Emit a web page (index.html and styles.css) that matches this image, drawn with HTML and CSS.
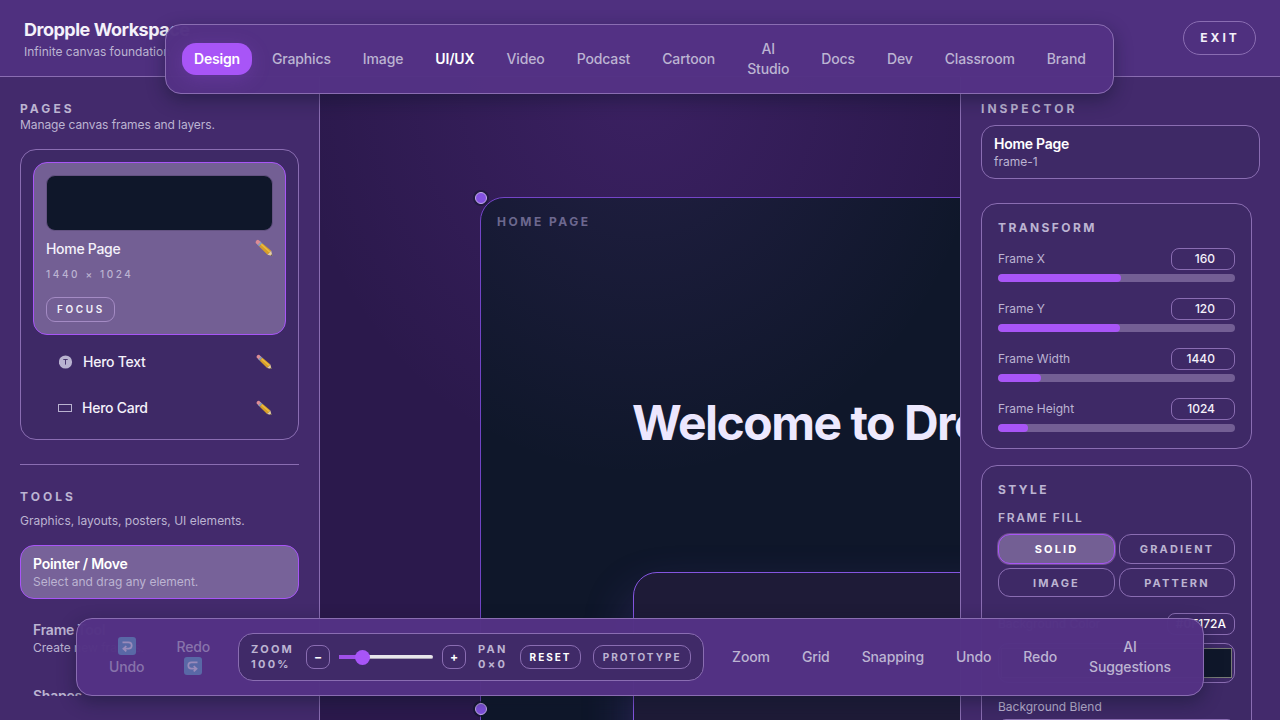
FILE: index.html
```html
<!DOCTYPE html>
<html lang="en">
<head>
<meta charset="utf-8">
<title>Dropple Workspace</title>
<link rel="stylesheet" href="styles.css">
</head>
<body>
<svg class="defs" width="0" height="0" aria-hidden="true">
  <symbol id="pencil" viewBox="0 0 18 18">
    <path d="M3.4.9 6 3.1 3 6.3.7 3.9Q.3 2.6 1.5 1.4 2.6.5 3.4.9Z" fill="#dd8c94"/>
    <path d="M5.5 2.7 7.3 4.2 4.2 7.5 2.5 5.8Z" fill="#8d9cb8"/>
    <path d="M7.3 4.2 16.2 11.7 12.5 15.8 4.2 7.5Z" fill="#d69e2a"/>
    <path d="M6.2 5.3 14.8 13" stroke="#edbd3e" stroke-width="1.4" fill="none"/>
    <path d="M16.2 11.7 17.4 17 12.5 15.8Z" fill="#e5ce9f"/>
    <path d="M16.9 15.3 17.4 17 15.6 16.6Z" fill="#554638"/>
  </symbol>
</svg>
<div class="app">
  <header class="header">
    <div>
      <h1 class="brand">Dropple Workspace</h1>
      <p class="tagline">Infinite canvas foundation</p>
    </div>
    <button class="exit">EXIT</button>
  </header>
  <main class="main">
    <aside class="side left">
      <div class="scroll">
        <h2 class="label">PAGES</h2>
        <p class="desc pages-desc">Manage canvas frames and layers.</p>
        <div class="pages">
          <div class="page-card">
            <div class="thumb"></div>
            <div class="page-row"><span>Home Page</span><svg class="pen" width="18" height="18"><use href="#pencil"/></svg></div>
            <div class="dims">1440 × 1024</div>
            <button class="focus">FOCUS</button>
          </div>
          <div class="layer"><svg width="14" height="14" viewBox="0 0 14 14"><circle cx="6.5" cy="7" r="6.6" fill="#b9b2d0"/><path d="M4.3 4.5h4.4M6.5 4.5v5.1" stroke="#3e2966" stroke-width=".9"/></svg><span class="layer-name">Hero Text</span><svg width="16" height="16"><use href="#pencil"/></svg></div>
          <div class="layer"><svg class="rect-icon" width="14" height="8" viewBox="0 0 14 8"><rect x=".5" y=".5" width="13" height="7" fill="none" stroke="#b9b2d0"/></svg><span class="layer-name">Hero Card</span><svg width="16" height="16"><use href="#pencil"/></svg></div>
        </div>
        <div class="divider"></div>
        <h2 class="label">TOOLS</h2>
        <p class="desc tools-desc">Graphics, layouts, posters, UI elements.</p>
        <div class="tools">
          <div class="tool active"><b>Pointer / Move</b><span>Select and drag any element.</span></div>
          <div class="tool"><b>Frame Tool</b><span>Create new frames.</span></div>
          <div class="tool"><b>Shapes</b><span>Draw shapes.</span></div>
        </div>
      </div>
    </aside>
    <section class="canvas">
      <div class="frame">
        <div class="frame-label">HOME PAGE</div>
        <div class="hero">Welcome to Dropple</div>
        <div class="hero-card"></div>
        <i class="handle corner"></i>
        <i class="handle middle"></i>
      </div>
      <div class="glow"></div>
    </section>
    <aside class="side right">
      <h2 class="label">INSPECTOR</h2>
      <div class="selected"><b>Home Page</b><span>frame-1</span></div>
      <div class="cards">
        <section class="card">
          <h2 class="label">TRANSFORM</h2>
          <div class="field"><div class="field-top"><span class="name">Frame X</span><span class="value">160</span></div><div class="bar"><div class="fill" style="width:52%"></div></div></div>
          <div class="field"><div class="field-top"><span class="name">Frame Y</span><span class="value">120</span></div><div class="bar"><div class="fill" style="width:51.5%"></div></div></div>
          <div class="field"><div class="field-top"><span class="name">Frame Width</span><span class="value">1440</span></div><div class="bar"><div class="fill" style="width:18.2%"></div></div></div>
          <div class="field"><div class="field-top"><span class="name">Frame Height</span><span class="value">1024</span></div><div class="bar"><div class="fill" style="width:12.7%"></div></div></div>
        </section>
        <section class="card style-card">
          <h2 class="label">STYLE</h2>
          <h3 class="sublabel">FRAME FILL</h3>
          <div class="fills">
            <button class="fill-btn on">SOLID</button><button class="fill-btn">GRADIENT</button>
            <button class="fill-btn">IMAGE</button><button class="fill-btn">PATTERN</button>
          </div>
          <div class="field-top color-row"><span class="name">Background Color</span><span class="value hex">#0F172A</span></div>
          <div class="swatch"><div></div></div>
          <div class="blend">Background Blend</div>
          <div class="select"></div>
        </section>
      </div>
    </aside>
  </main>
</div>
<nav class="dock top">
  <span class="item design">Design</span><span class="item">Graphics</span><span class="item">Image</span><span class="item strong">UI/UX</span><span class="item">Video</span><span class="item">Podcast</span><span class="item">Cartoon</span><span class="item">AI<br>Studio</span><span class="item">Docs</span><span class="item">Dev</span><span class="item">Classroom</span><span class="item">Brand</span>
</nav>
<nav class="dock bottom">
  <span class="item off"><svg width="18" height="18" viewBox="0 0 18 18"><rect width="18" height="18" rx="3" fill="#5f9fc9"/><path d="M4.5 5.3h6a3.2 3.2 0 0 1 0 6.4H6M8.3 9 5.4 11.7l2.9 2.7" fill="none" stroke="#dfe3f2" stroke-width="1.7"/></svg>Undo</span>
  <span class="item off">Redo<svg width="18" height="18" viewBox="0 0 18 18"><rect width="18" height="18" rx="3" fill="#5f9fc9"/><path d="M13.5 5.3h-6a3.2 3.2 0 0 0 0 6.4H12M9.7 9l2.9 2.7-2.9 2.7" fill="none" stroke="#dfe3f2" stroke-width="1.7"/></svg></span>
  <div class="zoombox">
    <div class="stat zoom">ZOOM<br>100%</div>
    <button class="step">−</button>
    <div class="slider"><div class="slider-fill"></div><div class="thumb-dot"></div></div>
    <button class="step">+</button>
    <div class="stat pan">PAN<br>0×0</div>
    <button class="mini reset">RESET</button>
    <button class="mini proto">PROTOTYPE</button>
  </div>
  <span class="item">Zoom</span><span class="item">Grid</span><span class="item">Snapping</span><span class="item">Undo</span><span class="item">Redo</span><span class="item">AI<br>Suggestions</span>
</nav>
</body>
</html>
```
FILE: styles.css
```css
:root {
  --line: #8a6db2;
  --accent: #a855f7;
  --muted: #bcb4d2;
  --text: #f4f1fa;
}
* { box-sizing: border-box; margin: 0; padding: 0; }
body { width: 1280px; height: 720px; overflow: hidden; font-family: Inter, "Liberation Sans", sans-serif; color: var(--text); background: #2b194c; font-size: 12px; }
button { font: inherit; color: inherit; background: none; border: 1px solid var(--line); }
.defs { position: absolute; }
.app { height: 720px; display: flex; flex-direction: column; }
.header { height: 77px; flex: none; display: flex; justify-content: space-between; align-items: flex-start; padding: 18px 24px 0; background: #4f307f; border-bottom: 1px solid var(--line); }
.brand { font-size: 18px; line-height: 24px; font-weight: 650; letter-spacing: -.48px; }
.tagline { margin-top: 1px; line-height: 18px; color: var(--muted); }
.exit { width: 73px; height: 34px; margin-top: 3px; border-radius: 17px; font-weight: 700; letter-spacing: 3px; line-height: 30px; padding-left: 1px; }
.main { flex: 1; min-height: 0; display: grid; grid-template-columns: 320px 640px 320px; }
.side { background: #432a6c; min-width: 0; min-height: 0; padding: 24px 20px; overflow: hidden; }
.left { border-right: 1px solid var(--line); }
.right { border-left: 1px solid var(--line); padding-bottom: 0; }
.scroll { height: 595px; overflow: hidden; }
.label { font-size: 12px; line-height: 16px; font-weight: 700; letter-spacing: 3.05px; color: var(--muted); }
.card .label { letter-spacing: 2.4px; }
.desc { line-height: 16px; color: var(--muted); }
.pages-desc { letter-spacing: -.09px; }
.pages { margin-top: 16px; height: 291px; border: 1px solid var(--line); border-radius: 16px; background: #3e2966; padding: 12px; }
.page-card { height: 173px; border: 1px solid var(--accent); border-radius: 14px; background: #735f94; padding: 12px; }
.thumb { height: 56px; background: #0f172a; border: 1px solid #645282; border-radius: 9px; }
.page-row { display: flex; justify-content: space-between; align-items: center; height: 20px; margin-top: 7px; font-size: 14px; font-weight: 500; letter-spacing: -.3px; }
.pen { margin-top: -1px; }
.dims { margin-top: 8px; line-height: 16px; font-size: 10px; letter-spacing: 2.6px; color: var(--muted); font-weight: 500; }
.focus { display: block; margin-top: 15px; width: 69px; height: 25px; border-radius: 9px; font-size: 10px; line-height: 21px; font-weight: 600; letter-spacing: 2.6px; border-color: #a48bc4; padding-left: 1px; }
.layer { height: 46px; margin-top: 4px; padding: 0 14px 0 26px; display: flex; align-items: center; font-size: 14px; font-weight: 500; letter-spacing: -.26px; }
.layer + .layer { margin-top: 0; }
.layer-name { flex: 1; margin-left: 10px; padding-bottom: 1px; }
.rect-icon { margin-left: -1px; margin-top: -1px; }
.divider { height: 1px; background: var(--line); margin: 24px 0; }
.tools-desc { margin-top: 8px; }
.tools { margin-top: 16px; display: grid; gap: 12px; }
.tool { height: 54px; padding: 9px 12px; border: 1px solid transparent; border-radius: 14px; }
.tool b, .selected b { display: block; font-size: 14px; line-height: 18px; font-weight: 600; letter-spacing: -.25px; color: var(--muted); }
.tool span, .selected span { display: block; margin-top: 1px; line-height: 16px; color: var(--muted); }
.tool.active { background: #776299; border-color: var(--accent); }
.tool.active b, .selected b { color: #fff; }

.canvas { position: relative; overflow: hidden; min-width: 0; background: #2b194c; }
.glow { position: absolute; inset: 0; background: radial-gradient(350px 400px at 50% 0, rgba(168,85,247,.13), transparent); }
.frame { position: absolute; left: 160px; top: 120px; width: 1440px; height: 1024px; border: 1px solid #7044c4; border-radius: 24px; background: #0f172a; }
.frame-label { position: absolute; left: 16px; top: 16px; line-height: 16px; font-weight: 700; letter-spacing: 2.5px; color: #686987; }
.hero { position: absolute; left: 151px; top: 196px; white-space: nowrap; font-size: 48px; line-height: 58px; font-weight: 700; letter-spacing: -1.5px; color: #ede9fe; }
.hero-card { position: absolute; left: 152px; top: 374px; width: 1000px; height: 400px; border: 1px solid #8455e0; border-radius: 24px; background: #1e1b37; box-shadow: 0 25px 50px rgba(139,92,246,.25); }
.handle { position: absolute; left: -6px; width: 12px; height: 12px; border-radius: 50%; background: #8252df; border: 1px solid #c4b0e8; box-shadow: 0 0 0 2px rgba(15,23,42,.65); }
.corner { top: -6px; }
.middle { top: 505px; }

.selected { height: 54px; margin-top: 8px; padding: 9px 12px; border: 1px solid var(--line); border-radius: 14px; background: #3e2966; }
.cards { width: 271px; margin-top: 24px; }
.card { height: 246px; border: 1px solid var(--line); border-radius: 16px; background: #3e2966; padding: 16px; }
.field { height: 50px; padding-top: 12px; }
.field-top { display: flex; justify-content: space-between; align-items: center; color: var(--muted); height: 22px; }
.name { padding-bottom: 2px; }
.value { width: 64px; height: 22px; border: 1px solid var(--line); border-radius: 8px; color: var(--text); font-weight: 500; line-height: 20px; text-align: right; padding-right: 19px; }
.bar { margin-top: 4px; height: 8px; background: #735f94; border-radius: 4px; overflow: hidden; }
.fill { height: 8px; background: var(--accent); border-radius: 4px; }
.style-card { margin-top: 16px; height: 400px; }
.sublabel { margin-top: 12px; font-size: 12px; line-height: 16px; font-weight: 600; letter-spacing: 1.65px; color: var(--muted); }
.fills { margin-top: 8px; display: grid; grid-template-columns: 117px 116px; grid-template-rows: 30px 29px; gap: 4px; }
.fill-btn { border-radius: 12px; font-size: 11px; font-weight: 700; letter-spacing: 2.15px; color: var(--muted); }
.fill-btn.on { background: #735f94; border-color: var(--accent); color: #fff; box-shadow: 0 0 0 1px #70518f; }
.color-row { margin-top: 16px; }
.hex { width: 68px; padding-right: 8px; color: #fff; }
.swatch { margin-top: 8px; height: 40px; border: 1px solid var(--line); border-radius: 10px; padding: 4px 2px; }
.swatch div { height: 30px; background: #0f172a; border: 1px solid #777b75; }
.blend { margin-top: 16px; line-height: 16px; color: var(--muted); }
.select { margin-top: 4px; height: 30px; border: 1px solid var(--line); border-radius: 8px; }

.dock { position: absolute; display: flex; align-items: center; gap: 8px; background: rgba(83,50,132,.985); border: 1px solid var(--line); border-radius: 16px; box-shadow: 0 6px 18px rgba(15,23,42,.45); }
.top { left: 165px; top: 24px; width: 949px; height: 70px; padding: 0 16px; }
.bottom { left: 76px; top: 618px; width: 1128px; height: 78px; padding: 0 20px; }
.item { padding: 0 12px; font-size: 14px; line-height: 20px; font-weight: 550; letter-spacing: -.13px; color: var(--muted); text-align: center; }
.design { padding: 6px 12px; border-radius: 14px; background: var(--accent); color: #fff; font-weight: 600; letter-spacing: -.2px; box-shadow: 0 4px 20px rgba(168,85,247,.2); }
.strong { color: #fff; font-weight: 600; }
.off { opacity: .5; display: flex; flex-direction: column; align-items: center; }
.off svg { margin: 0 0 2px; }
.zoombox { width: 466px; height: 48px; flex: none; margin: 0 8px; padding: 0 12px; display: flex; align-items: center; border: 1px solid var(--line); border-radius: 15px; background: #402a68; }
.stat { font-size: 11px; line-height: 15px; font-weight: 700; letter-spacing: 2.2px; color: var(--muted); }
.zoom { width: 55px; }
.step { width: 24px; height: 24px; border-radius: 8px; font-size: 12px; font-weight: 700; line-height: 22px; color: #fff; }
.slider { position: relative; width: 94px; height: 4px; margin: 0 9px; background: #e8e6eb; border-bottom: 1px solid #aaa3b7; border-radius: 2px; }
.slider-fill { width: 23px; height: 4px; background: #9f50e9; }
.thumb-dot { position: absolute; left: 15.5px; top: -5.5px; width: 15px; height: 15px; border-radius: 50%; background: var(--accent); }
.pan { width: 42px; margin-left: 12px; }
.mini { height: 24px; border-radius: 10px; font-size: 10px; line-height: 20px; letter-spacing: 2px; font-weight: 700; padding-left: 0; }
.reset { width: 61px; color: #fff; }
.proto { width: 98px; margin-left: 12px; color: var(--muted); font-weight: 650; }
```
